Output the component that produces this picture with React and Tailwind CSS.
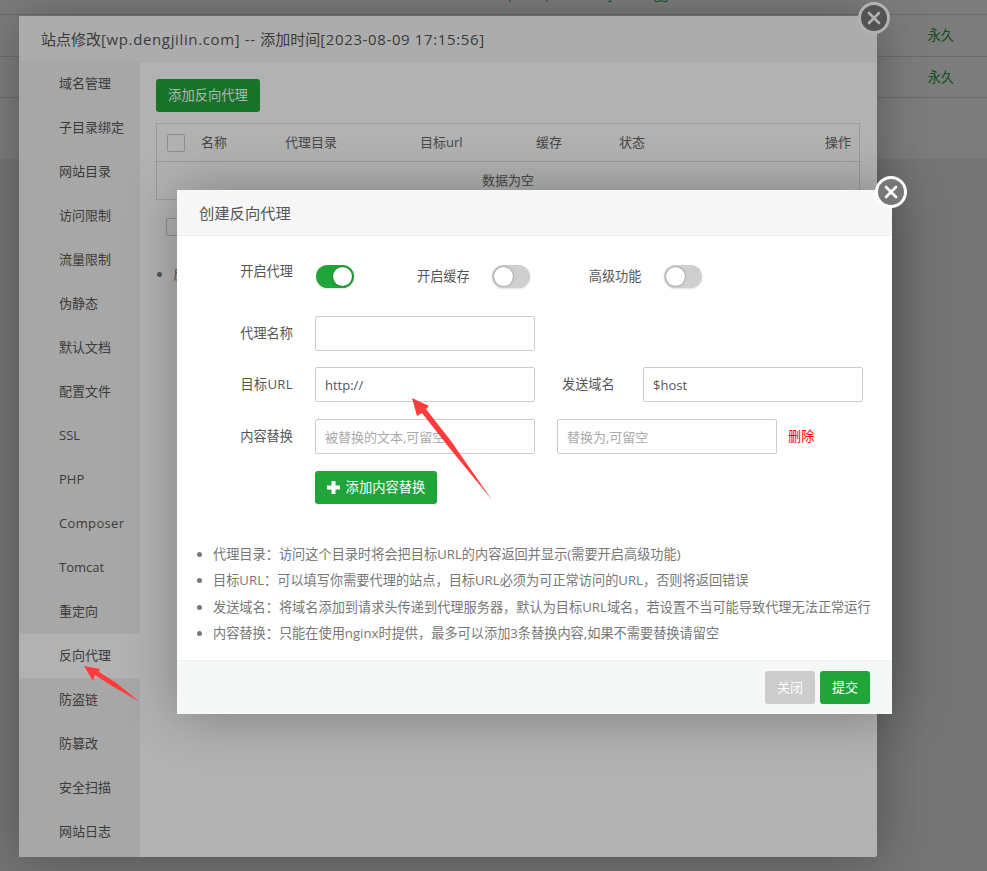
import React from 'react';

const font = { fontFamily: '"Open Sans", "Noto Sans CJK SC", sans-serif' };

const sideItems = ['域名管理', '子目录绑定', '网站目录', '访问限制', '流量限制', '伪静态', '默认文档', '配置文件', 'SSL', 'PHP', 'Composer', 'Tomcat', '重定向', '反向代理', '防盗链', '防篡改', '安全扫描', '网站日志'];

const notes = [
  '代理目录：访问这个目录时将会把目标URL的内容返回并显示(需要开启高级功能)',
  '目标URL：可以填写你需要代理的站点，目标URL必须为可正常访问的URL，否则将返回错误',
  '发送域名：将域名添加到请求头传递到代理服务器，默认为目标URL域名，若设置不当可能导致代理无法正常运行',
  '内容替换：只能在使用nginx时提供，最多可以添加3条替换内容,如果不需要替换请留空',
];

function CloseBtn({ className }) {
  return (
    <div className={`absolute flex h-[32px] w-[32px] items-center justify-center rounded-full border-[3px] border-white bg-[#777] ${className}`}>
      <svg width="14" height="14" viewBox="0 0 14 14">
        <path d="M2 2 L12 12 M12 2 L2 12" stroke="#fff" strokeWidth="2.6" strokeLinecap="round" />
      </svg>
    </div>
  );
}

function Toggle({ on }) {
  return (
    <div className={`flex h-[23px] w-[38px] shrink-0 items-center rounded-full px-[2px] shadow-[0_1px_2px_rgba(0,0,0,0.12)] ${on ? 'justify-end bg-[#20a53a]' : 'justify-start bg-[#cfcfcf]'}`}>
      <div className="h-[19px] w-[19px] rounded-full bg-white shadow-[0_0_2px_rgba(0,0,0,0.5)]"></div>
    </div>
  );
}

function Field({ value, placeholder }) {
  return (
    <input
      type="text"
      readOnly
      value={value}
      placeholder={placeholder}
      className="h-[35px] w-[220px] shrink-0 rounded-[2px] border border-[#ccc] bg-white px-[9px] text-[13px] text-[#555] outline-none placeholder:text-[#aaa]"
    />
  );
}

export default function App() {
  return (
    <div className="relative h-[871px] w-[987px] overflow-hidden bg-[#f0f0f0] text-[13px] text-[#555]" style={font}>
      {/* page behind */}
      <div className="bg-white">
        <div className="flex h-[15px] items-start overflow-hidden border-b border-[#ddd] pl-[508px] text-[#20a53a]">
          <span className="mt-[-15px] w-[37px] leading-[18px]">p</span>
          <span className="mt-[-15px] w-[63px] leading-[18px]">p</span>
          <span className="mt-[-15px] w-[46px] leading-[18px]">y</span>
          <span className="mt-[-15px] leading-[18px]">gg</span>
        </div>
        <div className="flex h-[42px] items-center justify-end border-b border-[#ddd] pr-[33px] text-[13.2px] text-[#20a53a]">永久</div>
        <div className="flex h-[41px] items-center justify-end border-b border-[#ddd] pr-[33px] pt-[1px] text-[13.2px] text-[#20a53a]">永久</div>
        <div className="h-[61px]"></div>
      </div>
      <div className="absolute inset-0 bg-black/30"></div>

      {/* first layer: site settings */}
      <div className="absolute left-[19px] top-[16px] flex h-[841px] w-[858px] flex-col rounded-[2px] bg-white shadow-[1px_1px_50px_rgba(0,0,0,0.3)]">
        <div className="flex h-[46px] shrink-0 items-center whitespace-pre border-b border-[#eee] bg-[#f7f7f7] pl-[22px] pt-[1px] text-[15px] text-[#555]">
          站点修改<span className="tracking-[0.63px]">[wp.dengjilin.com] -- </span>添加时间<span className="tracking-[0.63px]">[2023-08-09 17:15:56]</span>
        </div>
        <div className="flex min-h-0 flex-1">
          <div className="w-[121px] shrink-0 overflow-hidden bg-[#f0f0f0]">
            {sideItems.map((item) => (
              <div key={item} className={`flex h-[44px] items-center pl-[40px] text-[13px] text-[#555] ${item === '反向代理' ? 'bg-white' : ''} ${item === 'Composer' ? 'tracking-[0.35px]' : ''}`}>
                {item}
              </div>
            ))}
          </div>
          <div className="flex-1 pl-[16px] pr-[17px] pt-[17px]">
            <button className="block h-[33px] w-[104px] rounded-[3px] bg-[#20a53a] text-[13.3px] text-white">添加反向代理</button>
            <div className="mt-[11px] border border-[#ddd]">
              <div className="flex h-[38px] items-center border-b border-[#ddd] pl-[10px] pr-[8px] text-[#666]">
                <div className="mr-[16px] h-[18px] w-[18px] rounded-[2px] border border-[#ccc] bg-white"></div>
                <span className="w-[84px]">名称</span>
                <span className="w-[135px]">代理目录</span>
                <span className="w-[116px]">目标url</span>
                <span className="w-[83px]">缓存</span>
                <span className="flex-1">状态</span>
                <span>操作</span>
              </div>
              <div className="flex h-[37px] items-center justify-center text-[#666]">数据为空</div>
            </div>
            <div className="ml-[10px] mt-[18px] h-[18px] w-[18px] rounded-[2px] border border-[#ccc] bg-white"></div>
            <ul className="mt-[29px] w-[32px] list-disc pl-[17px] text-[#777]">
              <li>反</li>
            </ul>
          </div>
        </div>
      </div>
      <CloseBtn className="left-[858px] top-[2px]" />
      <div className="absolute inset-0 bg-black/30"></div>

      {/* second layer: create proxy */}
      <div className="absolute left-[177px] top-[190px] flex h-[524px] w-[715px] flex-col bg-white text-[13.2px] shadow-[1px_1px_50px_rgba(0,0,0,0.3)]">
        <div className="flex h-[46px] shrink-0 items-center border-b border-[#eee] bg-[#f7f7f7] pl-[22px] pt-[1px] text-[15.3px] text-[#555]">创建反向代理</div>
        <div className="flex-1">
          <div className="flex h-[52px] items-end">
            <span className="mb-[8px] mr-[23px] w-[116px] text-right leading-[18px]">开启代理</span>
            <Toggle on />
            <span className="ml-[63px] mr-[22px] self-end pb-[3px] leading-[18px]">开启缓存</span>
            <Toggle />
            <span className="ml-[59px] mr-[22px] self-end pb-[3px] leading-[18px]">高级功能</span>
            <Toggle />
          </div>
          <div className="mt-[28px] flex items-center">
            <span className="mr-[22px] w-[116px] text-right">代理名称</span>
            <Field />
          </div>
          <div className="mt-[16px] flex items-center">
            <span className="mr-[22px] w-[116px] text-right tracking-[0.3px]">目标URL</span>
            <Field value="http://" />
            <span className="ml-[27px] mr-[28px] w-[53px] whitespace-nowrap">发送域名</span>
            <Field value="$host" />
          </div>
          <div className="mt-[17px] flex items-center">
            <span className="mr-[22px] w-[116px] text-right">内容替换</span>
            <Field placeholder="被替换的文本,可留空" />
            <div className="w-[22px] shrink-0"></div>
            <Field placeholder="替换为,可留空" />
            <span className="ml-[11px] text-[#f00]">删除</span>
          </div>
          <button className="ml-[138px] mt-[17px] flex h-[33px] w-[122px] items-center justify-center gap-[6px] rounded-[3px] bg-[#20a53a] text-[13.3px] text-white">
            <svg width="13" height="13" viewBox="0 0 13 13">
              <path d="M4.5 0h4v4.5H13v4H8.5V13h-4V8.5H0v-4h4.5z" fill="#fff" />
            </svg>
            添加内容替换
          </button>
          <ul className="mt-[37px] list-disc pl-[36px] text-[13.2px] leading-[26.3px] text-[#777] marker:text-[#777]">
            {notes.map((n) => (
              <li key={n} className="whitespace-nowrap">{n}</li>
            ))}
          </ul>
        </div>
        <div className="flex h-[54px] shrink-0 items-center justify-end gap-[5px] border-t border-[#eef0f0] bg-[#f6f8f8] pr-[22px]">
          <button className="h-[33px] w-[50px] rounded-[3px] bg-[#ccc] text-[13px] text-white">关闭</button>
          <button className="h-[33px] w-[50px] rounded-[3px] bg-[#20a53a] text-[13px] text-white">提交</button>
        </div>
      </div>
      <CloseBtn className="left-[875px] top-[176px]" />

      {/* screenshot annotations */}
      <svg className="pointer-events-none absolute inset-0" width="987" height="871" viewBox="0 0 987 871">
        <polygon points="412,398 429,406 426,409 451,441 492,500 447,445 422,413 417,416" fill="#ff3b3b" />
        <polygon points="84,666 100,669 99,672 115,682 140,702 112,686 95,675 93,681" fill="#ff3b3b" />
      </svg>
    </div>
  );
}
